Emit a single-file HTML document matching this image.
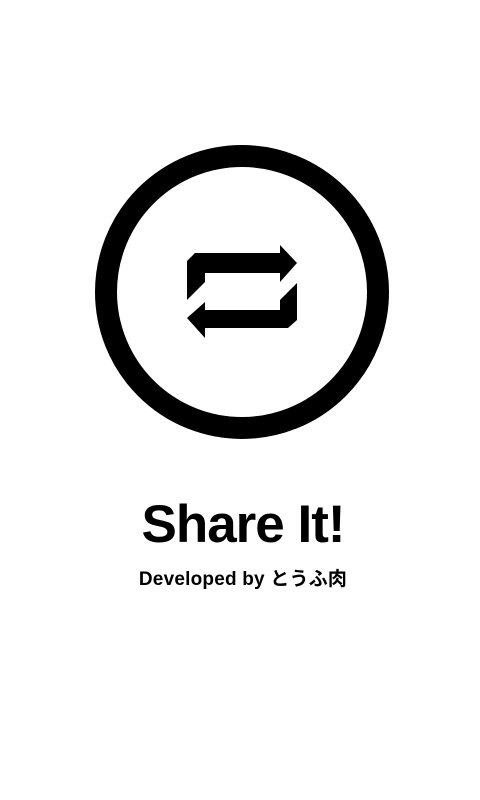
<!DOCTYPE html>
<html><head><meta charset="utf-8"><style>
html,body{margin:0;padding:0;background:#fff;width:480px;height:800px;overflow:hidden}
.t{position:absolute;left:0;width:486px;text-align:center;font-family:"Liberation Sans","Noto Sans CJK JP",sans-serif;font-weight:bold;color:#000}
</style></head><body>
<svg width="480" height="800" style="position:absolute;left:0;top:0">
<circle cx="242" cy="292" r="136" fill="none" stroke="#000" stroke-width="22"/>
<path d="M195,253 L280,253 L280,245 L297,263 L280,282 L280,273 L205,273 L205,282 L187,300 L187,261 Z" fill="#000"/>
<path d="M288,328 L205,328 L205,338 L187,318 L205,302 L205,310 L280,310 L280,300 L297,283 L297,320 Z" fill="#000"/>
</svg>
<div class="t" style="top:494px;font-size:53px;letter-spacing:-1px">Share It!</div>
<div class="t" style="top:564px;font-size:19px;letter-spacing:0.2px">Developed by とうふ肉</div>
</body></html>
